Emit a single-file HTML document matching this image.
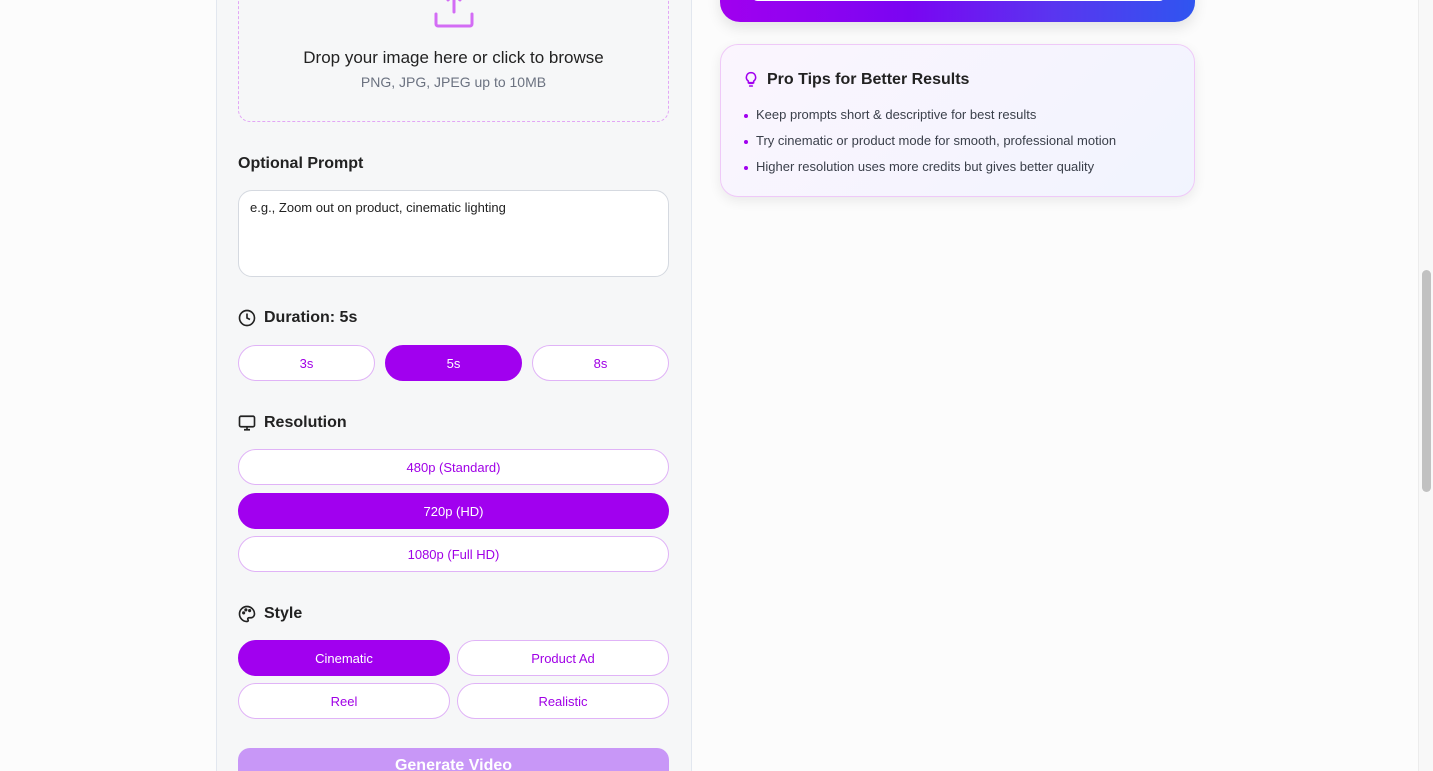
<!DOCTYPE html>
<html style="overflow:hidden;width:1433px;height:771px"><head><style>
*{box-sizing:border-box;margin:0;padding:0}
body{width:1433px;height:771px;overflow:hidden;background:#fcfcfc;font-family:"Liberation Sans",sans-serif;position:relative;color:#222}
.panel{position:absolute;left:216px;top:-20px;width:476px;height:791px;background:#f6f7f8;border:1px solid #e2e7ef;border-bottom:none;border-radius:16px 16px 0 0}
.abs{position:absolute}
.drop{left:238px;top:-20px;width:431px;height:142px;border:1px dashed #e2a6f5;border-radius:12px}
.h{font-weight:bold;font-size:16px;color:#222;display:flex;align-items:center;gap:8px}
.btn{position:absolute;height:36px;border:1px solid #e0b3f7;background:#fff;border-radius:18px;color:#a000e6;font-size:13px;display:flex;align-items:center;justify-content:center}
.on{background:#a100ef;color:#fff;border-color:#a100ef}
.tips{left:720px;top:44px;width:475px;height:153px;border:1px solid #efc9f8;border-radius:18px;background:linear-gradient(135deg,#fbf5fe,#f1f4fe);box-shadow:0 4px 12px rgba(0,0,0,.08)}
.tips li{list-style:none;font-size:13px;color:#3a3f4a;position:relative;padding-left:35px;height:26px}
.tips li:before{content:"";position:absolute;left:23px;top:7px;width:4px;height:4px;border-radius:50%;background:#a100ef}
</style></head><body>
<div class="panel"></div>
<div class="abs drop"></div>
<svg class="abs" style="left:434px;top:-6px" width="40" height="36" viewBox="0 0 40 36" fill="none" stroke="#d36cf5" stroke-width="3" stroke-linecap="round" stroke-linejoin="round"><path d="M20 18V0M14 6l6-6 6 6M2 20v10a2 2 0 0 0 2 2h32a2 2 0 0 0 2-2V20"/></svg>
<div class="abs" style="left:238px;width:431px;top:48px;text-align:center;font-size:17px;color:#222">Drop your image here or click to browse</div>
<div class="abs" style="left:238px;width:431px;top:74px;text-align:center;font-size:14px;color:#6b7280">PNG, JPG, JPEG up to 10MB</div>
<div class="abs h" style="left:238px;top:155px">Optional Prompt</div>
<div class="abs" style="left:238px;top:190px;width:431px;height:87px;background:#fff;border:1px solid #d5d9e0;border-radius:14px;padding:9px 11px;font-size:13px;color:#222">e.g., Zoom out on product, cinematic lighting</div>
<div class="abs h" style="left:238px;top:309px"><svg width="18" height="18" viewBox="0 0 24 24" fill="none" stroke="#222" stroke-width="2.2"><circle cx="12" cy="12" r="10"/><path d="M12 6v6l4 2"/></svg>Duration: 5s</div>
<div class="btn" style="left:238px;top:345px;width:137px">3s</div>
<div class="btn on" style="left:385px;top:345px;width:137px">5s</div>
<div class="btn" style="left:532px;top:345px;width:137px">8s</div>
<div class="abs h" style="left:238px;top:414px"><svg width="18" height="18" viewBox="0 0 24 24" fill="none" stroke="#222" stroke-width="2.2"><rect x="2" y="3" width="20" height="14" rx="2"/><path d="M8 21h8M12 17v4"/></svg>Resolution</div>
<div class="btn" style="left:238px;top:449px;width:431px">480p (Standard)</div>
<div class="btn on" style="left:238px;top:493px;width:431px">720p (HD)</div>
<div class="btn" style="left:238px;top:536px;width:431px">1080p (Full HD)</div>
<div class="abs h" style="left:238px;top:605px"><svg width="18" height="18" viewBox="0 0 24 24" fill="none" stroke="#222" stroke-width="2.2"><path d="M12 2a10 10 0 0 0 0 20c1.7 0 2-1.3 1.3-2.3-.8-1.2 0-2.7 1.4-2.7H17a5 5 0 0 0 5-5C22 6.5 17.5 2 12 2z"/><circle cx="7.5" cy="10.5" r="1" fill="#222"/><circle cx="10.5" cy="6.5" r="1" fill="#222"/><circle cx="15.5" cy="7.5" r="1" fill="#222"/></svg>Style</div>
<div class="btn on" style="left:238px;top:640px;width:212px">Cinematic</div>
<div class="btn" style="left:457px;top:640px;width:212px">Product Ad</div>
<div class="btn" style="left:238px;top:683px;width:212px">Reel</div>
<div class="btn" style="left:457px;top:683px;width:212px">Realistic</div>
<div class="abs" style="left:238px;top:748px;width:431px;height:23px;background:#c897f7;border-radius:12px 12px 0 0;color:#fff;font-weight:bold;font-size:16px;text-align:center;padding-top:9px;overflow:hidden;line-height:18px">Generate Video</div>
<div class="abs" style="left:720px;top:-30px;width:475px;height:52px;border-radius:20px;background:linear-gradient(90deg,#a100ef,#7a05f2 40%,#5a35f0 70%,#2f55f0);box-shadow:0 6px 14px rgba(0,0,0,.1)"></div>
<div class="abs" style="left:752px;top:-10px;width:413px;height:11px;background:#fff;border-radius:6px"></div>
<div class="abs tips">
<div class="h" style="position:absolute;left:22px;top:26px"><svg width="16" height="18" viewBox="0 0 24 26" fill="none" stroke="#a100ef" stroke-width="2.3" stroke-linecap="round"><path d="M9 18h6M10 22h4M12 2a7 7 0 0 0-4 12.7V17h8v-2.3A7 7 0 0 0 12 2z"/></svg>Pro Tips for Better Results</div>
<ul style="position:absolute;left:0;top:62px">
<li>Keep prompts short &amp; descriptive for best results</li>
<li>Try cinematic or product mode for smooth, professional motion</li>
<li>Higher resolution uses more credits but gives better quality</li></ul>
</div>
<div class="abs" style="left:1418px;top:0;width:15px;height:771px;background:#f8f8f8;border-left:1px solid #ececec"></div>
<div class="abs" style="left:1422px;top:270px;width:9px;height:222px;background:#c1c1c1;border-radius:5px"></div>
</body></html>
